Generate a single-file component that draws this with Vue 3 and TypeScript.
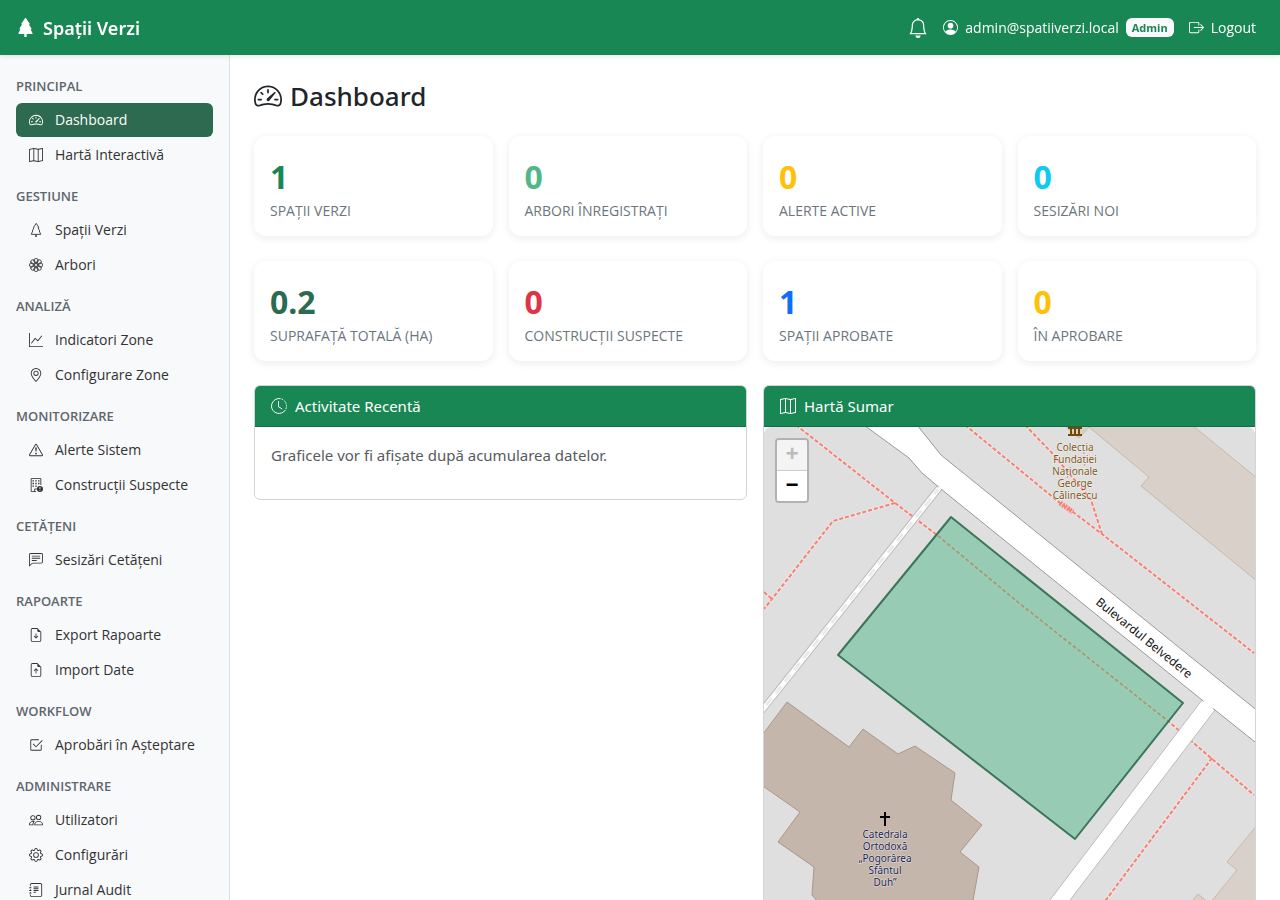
<script setup lang="ts">
import { h, type FunctionalComponent } from 'vue'

interface Shape {
  d: string
  line?: boolean
  dash?: string
}

const fill = (...paths: string[]): Shape[] => paths.map((d) => ({ d }))
const filePage =
  'M14 14V4.5L9.5 0H4a2 2 0 0 0-2 2v12a2 2 0 0 0 2 2h8a2 2 0 0 0 2-2M9.5 3A1.5 1.5 0 0 0 11 4.5h2V14a1 1 0 0 1-1 1H4a1 1 0 0 1-1-1V2a1 1 0 0 1 1-1h5.5z'

const icons: Record<string, Shape[]> = {
  treeFill: fill(
    'M8.416.223a.5.5 0 0 0-.832 0l-3 4.5A.5.5 0 0 0 5 5.5h.098L3.076 8.735A.5.5 0 0 0 3.5 9.5h.191l-1.638 3.276a.5.5 0 0 0 .447.724H7V16h2v-2.5h4.5a.5.5 0 0 0 .447-.724L12.31 9.5h.191a.5.5 0 0 0 .424-.765L10.902 5.5H11a.5.5 0 0 0 .416-.777z'
  ),
  tree: [
    {
      d: 'M8 .8L5.2 5H5.7L3.900 9H4.300L2.600 13H13.400L11.700 9H12.100L10.300 5H10.800z',
      line: true
    },
    { d: 'M7.2 13h1.600v3H7.200z' }
  ],
  speedometer: fill(
    'M8 4a.5.5 0 0 1 .5.5V6a.5.5 0 0 1-1 0V4.5A.5.5 0 0 1 8 4M3.732 5.732a.5.5 0 0 1 .707 0l.915.914a.5.5 0 1 1-.708.708l-.914-.915a.5.5 0 0 1 0-.707M2 10a.5.5 0 0 1 .5-.5h1.586a.5.5 0 0 1 0 1H2.5A.5.5 0 0 1 2 10m9.5 0a.5.5 0 0 1 .5-.5h1.5a.5.5 0 0 1 0 1H12a.5.5 0 0 1-.5-.5m.754-4.246a.39.39 0 0 0-.527-.02L7.547 9.31a.91.91 0 1 0 1.302 1.258l3.434-4.297a.39.39 0 0 0-.029-.518z',
    'M0 10a8 8 0 1 1 15.547 2.661c-.442 1.253-1.845 1.602-2.932 1.25C11.309 13.488 9.475 13 8 13c-1.474 0-3.31.488-4.615.911-1.087.352-2.49.003-2.932-1.25A8 8 0 0 1 0 10m8-7a7 7 0 0 0-6.603 9.329c.203.575.923.876 1.68.63C4.397 12.533 6.358 12 8 12s3.604.532 4.923.96c.757.245 1.477-.056 1.68-.631A7 7 0 0 0 8 3'
  ),
  map: fill(
    'M15.817.113A.5.5 0 0 1 16 .5v14a.5.5 0 0 1-.402.49l-5 1a.5.5 0 0 1-.196 0L5.5 15.01l-4.902.98A.5.5 0 0 1 0 15.5v-14a.5.5 0 0 1 .402-.49l5-1a.5.5 0 0 1 .196 0L10.5.99l4.902-.98a.5.5 0 0 1 .415.103M10 1.91l-4-.8v12.98l4 .8zm1 12.98 4-.8V1.11l-4 .8zm-6-.8V1.11l-4 .8v12.98z'
  ),
  flower: [
    { d: 'M8 6.2a1.8 1.8 0 1 0 0 3.6 1.8 1.8 0 0 0 0-3.6', line: true },
    {
      d: Array.from({ length: 8 }, (_, i) => {
        const a = (i * Math.PI) / 4
        const x = (8 + 5 * Math.cos(a)).toFixed(2)
        const y = (8 + 5 * Math.sin(a)).toFixed(2)
        return `M${x} ${y}m-2.5 0a2.5 2.5 0 1 0 5 0a2.5 2.5 0 1 0-5 0`
      }).join(''),
      line: true
    }
  ],
  graph: fill(
    'M0 0h1v15h15v1H0zm14.817 3.113a.5.5 0 0 1 .07.704l-4.5 5.5a.5.5 0 0 1-.74.037L7.06 6.767l-3.656 5.027a.5.5 0 0 1-.808-.588l4-5.5a.5.5 0 0 1 .758-.06l2.609 2.61 4.15-5.073a.5.5 0 0 1 .704-.07'
  ),
  pin: fill(
    'M12.166 8.94c-.524 1.062-1.234 2.12-1.96 3.07A32 32 0 0 1 8 14.58a32 32 0 0 1-2.206-2.57c-.726-.95-1.436-2.008-1.96-3.07C3.304 7.867 3 6.862 3 6a5 5 0 0 1 10 0c0 .862-.305 1.867-.834 2.94M8 16s6-5.686 6-10A6 6 0 0 0 2 6c0 4.314 6 10 6 10',
    'M8 8a2 2 0 1 1 0-4 2 2 0 0 1 0 4m0 1a3 3 0 1 0 0-6 3 3 0 0 0 0 6'
  ),
  warning: fill(
    'M7.938 2.016A.13.13 0 0 1 8.002 2a.13.13 0 0 1 .063.016.15.15 0 0 1 .054.057l6.857 11.667c.036.06.035.124.002.183a.2.2 0 0 1-.054.06.1.1 0 0 1-.066.017H1.146a.1.1 0 0 1-.066-.017.2.2 0 0 1-.054-.06.18.18 0 0 1 .002-.183L7.884 2.073a.15.15 0 0 1 .054-.057m1.044-.45a1.13 1.13 0 0 0-1.96 0L.165 13.233c-.457.778.091 1.767.98 1.767h13.713c.889 0 1.438-.99.98-1.767z',
    'M7.002 12a1 1 0 1 1 2 0 1 1 0 0 1-2 0M7.1 5.995a.905.905 0 1 1 1.8 0l-.35 3.507a.552.552 0 0 1-1.1 0z'
  ),
  building: [
    { d: 'M7.5 15.5h-5v-15h11v7M6.5 15.5v-3h2', line: true },
    {
      d: 'M4 2.5h1.6v1.5H4zM7.2 2.5h1.6v1.5H7.2zM10.4 2.5H12v1.5h-1.6zM4 5.5h1.6v1.5H4zM7.2 5.5h1.6v1.5H7.2zM10.4 5.5H12v1.5h-1.6zM4 8.5h1.6v1.5H4zM7.2 8.5h1.6v1.5H7.2z'
    },
    { d: 'M12.5 9a3.5 3.5 0 1 0 0 7 3.5 3.5 0 0 0 0-7M12 10.2h1v2.6h-1zM12 13.6h1v1h-1z' }
  ],
  chat: fill(
    'M14 1a1 1 0 0 1 1 1v8a1 1 0 0 1-1 1H4.414A2 2 0 0 0 3 11.586l-2 2V2a1 1 0 0 1 1-1zM2 0a2 2 0 0 0-2 2v12.793a.5.5 0 0 0 .854.353l2.853-2.853A1 1 0 0 1 4.414 12H14a2 2 0 0 0 2-2V2a2 2 0 0 0-2-2z',
    'M3 3.5a.5.5 0 0 1 .5-.5h9a.5.5 0 0 1 0 1h-9a.5.5 0 0 1-.5-.5M3 6a.5.5 0 0 1 .5-.5h9a.5.5 0 0 1 0 1h-9A.5.5 0 0 1 3 6m0 2.5a.5.5 0 0 1 .5-.5h5a.5.5 0 0 1 0 1h-5a.5.5 0 0 1-.5-.5'
  ),
  fileDown: fill(
    'M8.5 6.5a.5.5 0 0 0-1 0v3.793L6.354 9.146a.5.5 0 1 0-.708.708l2 2a.5.5 0 0 0 .708 0l2-2a.5.5 0 0 0-.708-.708L8.5 10.293z',
    filePage
  ),
  fileUp: fill(
    'M8.5 11.5a.5.5 0 0 1-1 0V7.707L6.354 8.854a.5.5 0 1 1-.708-.708l2-2a.5.5 0 0 1 .708 0l2 2a.5.5 0 0 1-.708.708L8.5 7.707z',
    filePage
  ),
  check: fill(
    'M3 14.5A1.5 1.5 0 0 1 1.5 13V3A1.5 1.5 0 0 1 3 1.5h8a.5.5 0 0 1 0 1H3a.5.5 0 0 0-.5.5v10a.5.5 0 0 0 .5.5h10a.5.5 0 0 0 .5-.5V8a.5.5 0 0 1 1 0v5a1.5 1.5 0 0 1-1.5 1.5z',
    'm8.354 10.354 7-7a.5.5 0 0 0-.708-.708L8 9.293 5.354 6.646a.5.5 0 1 0-.708.708l3 3a.5.5 0 0 0 .708 0'
  ),
  people: fill(
    'M15 14s1 0 1-1-1-4-5-4-5 3-5 4 1 1 1 1zm-7.978-1L7 12.996c.001-.264.167-1.03.76-1.72C8.312 10.629 9.282 10 11 10c1.717 0 2.687.63 3.24 1.276.593.69.758 1.457.76 1.72l-.008.002-.014.002zM11 7a2 2 0 1 0 0-4 2 2 0 0 0 0 4m3-2a3 3 0 1 1-6 0 3 3 0 0 1 6 0M6.936 9.28a6 6 0 0 0-1.23-.247A7 7 0 0 0 5 9c-4 0-5 3-5 4q0 1 1 1h4.216A2.24 2.24 0 0 1 5 13c0-1.01.377-2.042 1.09-2.904.243-.294.526-.569.846-.816M4.92 10A5.5 5.5 0 0 0 4 13H1c0-.26.164-1.03.76-1.724.545-.636 1.492-1.256 3.16-1.275ZM1.5 5.5a3 3 0 1 1 6 0 3 3 0 0 1-6 0m3-2a2 2 0 1 0 0 4 2 2 0 0 0 0-4'
  ),
  gear: fill(
    'M8 4.754a3.246 3.246 0 1 0 0 6.492 3.246 3.246 0 0 0 0-6.492M5.754 8a2.246 2.246 0 1 1 4.492 0 2.246 2.246 0 0 1-4.492 0',
    'M9.796 1.343c-.527-1.79-3.065-1.79-3.592 0l-.094.319a.873.873 0 0 1-1.255.52l-.292-.16c-1.64-.892-3.433.902-2.54 2.541l.159.292a.873.873 0 0 1-.52 1.255l-.319.094c-1.79.527-1.79 3.065 0 3.592l.319.094a.873.873 0 0 1 .52 1.255l-.16.292c-.892 1.64.901 3.434 2.541 2.54l.292-.159a.873.873 0 0 1 1.255.52l.094.319c.527 1.79 3.065 1.79 3.592 0l.094-.319a.873.873 0 0 1 1.255-.52l.292.16c1.64.893 3.434-.902 2.54-2.541l-.159-.292a.873.873 0 0 1 .52-1.255l.319-.094c1.79-.527 1.79-3.065 0-3.592l-.319-.094a.873.873 0 0 1-.52-1.255l.16-.292c.893-1.64-.902-3.433-2.541-2.54l-.292.159a.873.873 0 0 1-1.255-.52zm-2.633.283c.246-.835 1.428-.835 1.674 0l.094.319a1.873 1.873 0 0 0 2.693 1.115l.291-.16c.764-.415 1.6.42 1.184 1.185l-.159.292a1.873 1.873 0 0 0 1.116 2.692l.318.094c.835.246.835 1.428 0 1.674l-.319.094a1.873 1.873 0 0 0-1.115 2.693l.16.291c.415.764-.42 1.6-1.185 1.184l-.291-.159a1.873 1.873 0 0 0-2.693 1.116l-.094.318c-.246.835-1.428.835-1.674 0l-.094-.319a1.873 1.873 0 0 0-2.692-1.115l-.292.16c-.764.415-1.6-.42-1.184-1.185l.159-.291A1.873 1.873 0 0 0 1.945 8.93l-.319-.094c-.835-.246-.835-1.428 0-1.674l.319-.094A1.873 1.873 0 0 0 3.06 4.377l-.16-.292c-.415-.764.42-1.6 1.185-1.184l.292.159a1.873 1.873 0 0 0 2.692-1.115z'
  ),
  journal: fill(
    'M5 10.5a.5.5 0 0 1 .5-.5h2a.5.5 0 0 1 0 1h-2a.5.5 0 0 1-.5-.5m0-2a.5.5 0 0 1 .5-.5h5a.5.5 0 0 1 0 1h-5a.5.5 0 0 1-.5-.5m0-2a.5.5 0 0 1 .5-.5h5a.5.5 0 0 1 0 1h-5a.5.5 0 0 1-.5-.5m0-2a.5.5 0 0 1 .5-.5h5a.5.5 0 0 1 0 1h-5a.5.5 0 0 1-.5-.5',
    'M3 0h10a2 2 0 0 1 2 2v12a2 2 0 0 1-2 2H3a2 2 0 0 1-2-2v-1h1v1a1 1 0 0 0 1 1h10a1 1 0 0 0 1-1V2a1 1 0 0 0-1-1H3a1 1 0 0 0-1 1v1H1V2a2 2 0 0 1 2-2',
    'M1 5v-.5a.5.5 0 0 1 1 0V5h.5a.5.5 0 0 1 0 1h-2a.5.5 0 0 1 0-1zm0 3v-.5a.5.5 0 0 1 1 0V8h.5a.5.5 0 0 1 0 1h-2a.5.5 0 0 1 0-1zm0 3v-.5a.5.5 0 0 1 1 0v.5h.5a.5.5 0 0 1 0 1h-2a.5.5 0 0 1 0-1z'
  ),
  bell: fill(
    'M8 16a2 2 0 0 0 2-2H6a2 2 0 0 0 2 2M8 1.918l-.797.161A4 4 0 0 0 4 6c0 .628-.134 2.197-.459 3.742-.16.767-.376 1.566-.663 2.258h10.244c-.287-.692-.502-1.49-.663-2.258C12.134 8.197 12 6.628 12 6a4 4 0 0 0-3.203-3.92zM14.22 12c.223.447.481.801.78 1H1c.299-.199.557-.553.78-1C2.68 10.2 3 6.88 3 6c0-2.42 1.72-4.44 4.005-4.901a1 1 0 1 1 1.99 0A5 5 0 0 1 13 6c0 .88.32 4.2 1.22 6'
  ),
  person: fill(
    'M11 6a3 3 0 1 1-6 0 3 3 0 0 1 6 0',
    'M0 8a8 8 0 1 1 16 0A8 8 0 0 1 0 8m8-7a7 7 0 0 0-5.468 11.37C3.242 11.226 4.805 10 8 10s4.757 1.225 5.468 2.37A7 7 0 0 0 8 1'
  ),
  logout: fill(
    'M10 12.5a.5.5 0 0 1-.5.5h-8a.5.5 0 0 1-.5-.5v-9a.5.5 0 0 1 .5-.5h8a.5.5 0 0 1 .5.5v2a.5.5 0 0 0 1 0v-2A1.5 1.5 0 0 0 9.5 2h-8A1.5 1.5 0 0 0 0 3.5v9A1.5 1.5 0 0 0 1.5 14h8a1.5 1.5 0 0 0 1.5-1.5v-2a.5.5 0 0 0-1 0z',
    'M15.854 8.354a.5.5 0 0 0 0-.708l-3-3a.5.5 0 0 0-.708.708L14.293 7.5H5.5a.5.5 0 0 0 0 1h8.793l-2.147 2.146a.5.5 0 0 0 .708.708z'
  ),
  clock: [
    { d: 'M8 .5a7.500 7.500 0 1 0 5.300 12.800', line: true },
    { d: 'M8 .5a7.500 7.500 0 0 1 5.300 12.800', line: true, dash: '1.6 1' },
    { d: 'M7.500 3.500v5.300l3.400 2', line: true }
  ]
}

const Icon: FunctionalComponent<{ name: string }> = (props) =>
  h(
    'svg',
    { class: 'icon', viewBox: '0 0 16 16', 'aria-hidden': 'true' },
    icons[props.name].map((s) =>
      h(
        'path',
        s.line
          ? { d: s.d, fill: 'none', stroke: 'currentColor', 'stroke-linecap': s.dash ? 'butt' : 'round', 'stroke-linejoin': 'round', 'stroke-dasharray': s.dash }
          : { d: s.d, fill: 'currentColor', 'fill-rule': 'evenodd' }
      )
    )
  )
Icon.props = ['name']

const sections = [
  {
    title: 'Principal',
    items: [
      { label: 'Dashboard', icon: 'speedometer', active: true },
      { label: 'Hartă Interactivă', icon: 'map' }
    ]
  },
  {
    title: 'Gestiune',
    items: [
      { label: 'Spații Verzi', icon: 'tree' },
      { label: 'Arbori', icon: 'flower' }
    ]
  },
  {
    title: 'Analiză',
    items: [
      { label: 'Indicatori Zone', icon: 'graph' },
      { label: 'Configurare Zone', icon: 'pin' }
    ]
  },
  {
    title: 'Monitorizare',
    items: [
      { label: 'Alerte Sistem', icon: 'warning' },
      { label: 'Construcții Suspecte', icon: 'building' }
    ]
  },
  { title: 'Cetățeni', items: [{ label: 'Sesizări Cetățeni', icon: 'chat' }] },
  {
    title: 'Rapoarte',
    items: [
      { label: 'Export Rapoarte', icon: 'fileDown' },
      { label: 'Import Date', icon: 'fileUp' }
    ]
  },
  { title: 'Workflow', items: [{ label: 'Aprobări în Așteptare', icon: 'check' }] },
  {
    title: 'Administrare',
    items: [
      { label: 'Utilizatori', icon: 'people' },
      { label: 'Configurări', icon: 'gear' },
      { label: 'Jurnal Audit', icon: 'journal' }
    ]
  }
] as { title: string; items: { label: string; icon: string; active?: boolean }[] }[]

const stats = [
  { value: '1', label: 'Spații verzi', tone: 'green' },
  { value: '0', label: 'Arbori înregistrați', tone: 'mint' },
  { value: '0', label: 'Alerte active', tone: 'yellow' },
  { value: '0', label: 'Sesizări noi', tone: 'cyan' },
  { value: '0.2', label: 'Suprafață totală (ha)', tone: 'forest' },
  { value: '0', label: 'Construcții suspecte', tone: 'red' },
  { value: '1', label: 'Spații aprobate', tone: 'blue' },
  { value: '0', label: 'În aprobare', tone: 'yellow' }
]

const footpaths = [
  'M796 425L895 503L937 535L1019 603L1168 721L1254 795',
  'M895 503L833 521L772 599L764 609',
  'M764 592L772 599',
  'M965 425L1015 466L1060 503L1073 512L1102 534L1254 653',
  'M1025 425L1052 453L1083 490L1091 500L1102 534',
  'M1212 758L1076 940'
]

const museumLabel = ['Colecția', 'Fundației', 'Naționale', 'George', 'Călinescu']
const churchLabel = ['Catedrala', 'Ortodoxă', '„Pogorârea', 'Sfântul', 'Duh”']
</script>

<template>
  <div class="app">
    <header class="topbar">
      <a class="brand" href="#"><Icon name="treeFill" /><span>Spații Verzi</span></a>
      <nav class="user-nav" aria-label="Cont">
        <button class="bell" type="button" aria-label="Notificări"><Icon name="bell" /></button>
        <a class="account" href="#"><Icon name="person" /><span>admin@spatiiverzi.local</span><span class="badge">Admin</span></a>
        <a class="logout" href="#"><Icon name="logout" /><span>Logout</span></a>
      </nav>
    </header>

    <div class="body">
      <nav class="sidebar" aria-label="Meniu principal">
        <section v-for="s in sections" :key="s.title" class="group">
          <h2>{{ s.title }}</h2>
          <ul>
            <li v-for="i in s.items" :key="i.label">
              <a href="#" :class="{ active: i.active }"><Icon :name="i.icon" /><span>{{ i.label }}</span></a>
            </li>
          </ul>
        </section>
      </nav>

      <main class="main">
        <h1><Icon name="speedometer" /><span>Dashboard</span></h1>

        <div class="stats">
          <article v-for="s in stats" :key="s.label" class="stat">
            <div class="value" :class="s.tone">{{ s.value }}</div>
            <div class="label">{{ s.label }}</div>
          </article>
        </div>

        <div class="panels">
          <section class="panel">
            <h2><Icon name="clock" /><span>Activitate Recentă</span></h2>
            <p>Graficele vor fi afișate după acumularea datelor.</p>
          </section>

          <section class="panel">
            <h2><Icon name="map" /><span>Hartă Sumar</span></h2>
            <div class="map">
              <svg class="map-canvas" viewBox="764 427 491 500" preserveAspectRatio="xMidYMin slice" role="img" aria-label="Hartă">
                <rect class="land" x="700" y="400" width="700" height="600" />
                <g class="house">
                  <path d="M1058 420L1079 438L1089 427L1149 477L1141 486L1258 582V479L1186 420z" />
                  <path d="M1258 824L1227 862L1237 870L1180 940H1258zM1185 910L1198 894L1210 904z" />
                </g>
                <path
                  class="church"
                  d="M760 738L787 702L849 747L863 729L898 754L915 746L955 773L951 800L982 825L960 852L979 867L966 940H850L812 895L814 867L778 842L800 812L760 784z"
                />
                <g class="paths-casing"><path v-for="d in footpaths" :key="d" :d="d" /></g>
                <g class="paths"><path v-for="d in footpaths" :key="d" :d="d" /></g>
                <path class="steps" d="M1060 503L1073 512" />

                <path class="side-road" d="M1202 700L1012 950L1032 950L1215 710" />
                <path class="service" d="M940 487L760 713" />
                <path class="service-fill" d="M940 487L760 713" />
                <path class="service-dash" d="M940 487L760 713" />
                <path
                  class="road"
                  d="M857 420L909 458L922 473L941 489L1202 700L1215 710L1270 754V721L1254 708L941 455L913 420z"
                />
                <path class="road-opening" d="M1204 701L1213 708M939 487L941 489" />

                <path class="area" d="M951 517L1183 703L1075 839L838 655z" />

                <path
                  class="museum-icon"
                  d="M1068 426h14v3h-14zM1070 429h2v5h-2zM1074 429h2v5h-2zM1078 429h2v5h-2zM1068 434h14v2h-14z"
                />
                <g class="map-text museum">
                  <text v-for="(t, i) in museumLabel" :key="t" x="1075" :y="451 + i * 12">{{ t }}</text>
                </g>
                <path class="cross" d="M885 812V826M880 817H890" />
                <g class="map-text church-name">
                  <text v-for="(t, i) in churchLabel" :key="t" x="885" :y="838 + i * 12">{{ t }}</text>
                </g>
                <text class="street" x="1144" y="642" transform="rotate(39 1144 638)">Bulevardul Belvedere</text>
              </svg>
              <div class="zoom">
                <button type="button" disabled aria-label="Mărește">+</button>
                <button type="button" aria-label="Micșorează">−</button>
              </div>
            </div>
          </section>
        </div>
      </main>
    </div>
  </div>
</template>

<style>
body {
  margin: 0;
}
</style>

<style scoped>
* {
  box-sizing: border-box;
}
.app {
  height: 100vh;
  display: flex;
  flex-direction: column;
  font-family: 'Noto Sans', 'Open Sans', sans-serif;
  font-size: 15px;
  line-height: 24px;
  color: #212529;
  background: #fff;
}
a {
  color: inherit;
  text-decoration: none;
}
button {
  font: inherit;
  cursor: pointer;
}
.icon {
  display: block;
  flex: none;
  width: 16px;
  height: 16px;
}
.topbar {
  position: relative;
  z-index: 2;
  flex: none;
  height: 55px;
  padding: 0 24px 0 16px;
  display: flex;
  align-items: center;
  justify-content: space-between;
  background: #198754;
  color: #fff;
  box-shadow: 0 2px 4px rgba(0, 0, 0, 0.08);
}
.brand {
  display: flex;
  align-items: center;
  gap: 8px;
  font-size: 18px;
  font-weight: 600;
}
.brand .icon {
  width: 19px;
  height: 19px;
}
.user-nav,
.account,
.logout {
  display: flex;
  align-items: center;
}
.user-nav {
  gap: 15px;
  font-family: 'Open Sans', 'Noto Sans', sans-serif;
  font-size: 14px;
}
.account,
.logout {
  gap: 7px;
}
.account .icon,
.logout .icon {
  width: 15px;
  height: 15px;
}
.bell {
  padding: 0;
  border: 0;
  background: none;
  color: inherit;
}
.bell .icon {
  width: 20px;
  height: 20px;
}
.badge {
  padding: 0 6px;
  border-radius: 6px;
  background: #f8f9fa;
  color: #198754;
  font-size: 11px;
  line-height: 19px;
  font-weight: 700;
}
.body {
  flex: 1;
  min-height: 0;
  display: flex;
}
.sidebar {
  flex: none;
  width: 230px;
  padding: 7px 16px 16px;
  overflow-y: auto;
  scrollbar-width: none;
  background: #f8f9fb;
  border-right: 1px solid #dee2e6;
  font-family: 'Open Sans', 'Noto Sans', sans-serif;
}
.group h2 {
  margin: 0;
  padding: 12px 0 5px;
  height: 41px;
  font-size: 13px;
  line-height: 24px;
  font-weight: 600;
  text-transform: uppercase;
  color: #5f666d;
}
.group ul {
  margin: 0;
  padding: 0;
  list-style: none;
  display: flex;
  flex-direction: column;
  gap: 1px;
}
.group a {
  height: 34px;
  padding: 0 13px;
  display: flex;
  align-items: center;
  gap: 12px;
  border-radius: 6px;
  font-size: 14px;
  color: #333;
}
.group a .icon {
  width: 14px;
  height: 14px;
}
.group a.active {
  background: #2d6a4f;
  color: #fff;
}
.main {
  flex: 1;
  min-width: 0;
  padding: 24px;
  overflow-y: auto;
  scrollbar-width: none;
}
h1 {
  margin: 0 0 23px;
  display: flex;
  align-items: center;
  gap: 8px;
  font-size: 26px;
  line-height: 34px;
  font-weight: 500;
}
h1 .icon {
  width: 28px;
  height: 28px;
}
.stats {
  display: grid;
  grid-template-columns: repeat(4, 1fr);
  gap: 25px 16px;
  margin-bottom: 24px;
}
.stat {
  padding: 23px 16px 15px;
  border-radius: 12px;
  background: #fff;
  box-shadow: 0 2px 8px rgba(0, 0, 0, 0.08);
}
.value {
  font-size: 32px;
  line-height: 35px;
  font-weight: 700;
}
.label {
  padding-top: 6px;
  font-family: 'Open Sans', 'Noto Sans', sans-serif;
  font-size: 14px;
  line-height: 21px;
  text-transform: uppercase;
  color: #6c757d;
}
.green { color: #198754; }
.mint { color: #52b788; }
.yellow { color: #ffc107; }
.cyan { color: #0dcaf0; }
.forest { color: #2d6a4f; }
.red { color: #dc3545; }
.blue { color: #0d6efd; }
.panels {
  display: grid;
  grid-template-columns: repeat(2, 1fr);
  gap: 16px;
  align-items: start;
}
.panel {
  border: 1px solid #d3d4d5;
  border-radius: 6px;
  overflow: hidden;
  background: #fff;
}
.panel h2 {
  margin: 0;
  padding: 8px 16px;
  display: flex;
  align-items: center;
  gap: 8px;
  font-size: 15px;
  line-height: 24px;
  font-weight: 400;
  color: #fff;
  background: #198754;
  border-bottom: 1px solid #166b45;
}
.panel p {
  margin: 0;
  padding: 16px 16px 32px;
  color: #565b60;
}
.map {
  position: relative;
  border-radius: 8px;
  overflow: hidden;
  background: #ddd;
}
.map-canvas {
  display: block;
  width: 100%;
  height: 500px;
}
.land { fill: #dfdfdf; }
.house path { fill: #d9d0c9; stroke: #c5b8ac; }
.church { fill: #c4b6ab; stroke: #ab9788; }
.paths-casing path { fill: none; stroke: #eee; stroke-width: 4; stroke-opacity: 0.5; }
.paths path { fill: none; stroke: #fa8072; stroke-width: 2; stroke-dasharray: 4 2; }
.steps { stroke: #fa8072; stroke-width: 5; stroke-dasharray: 2 1; }
.side-road { fill: #fff; stroke: #bbb; }
.service { stroke: #bbb; stroke-width: 7; }
.service-fill { stroke: #fff; stroke-width: 5; }
.service-dash { stroke: #ebebeb; stroke-width: 3; stroke-dasharray: 9 6; }
.road { fill: #fff; stroke: #999; }
.road-opening { stroke: #fff; stroke-width: 4; }
.area { fill: #52b788; fill-opacity: 0.5; stroke: #2d6a4f; stroke-opacity: 0.9; stroke-width: 2; stroke-linejoin: round; }
.museum-icon { fill: #734a08; }
.map-text text {
  font-size: 10px;
  text-anchor: middle;
  paint-order: stroke;
  stroke-width: 1;
  stroke-linejoin: round;
}
.museum text { fill: #7d5818; stroke: rgba(255, 255, 255, 0.6); }
.church-name text { fill: #1c1c50; stroke: rgba(255, 255, 255, 0.6); }
.cross { stroke: #000; stroke-width: 2; }
.street { font-size: 12px; text-anchor: middle; fill: #111; }
.zoom {
  position: absolute;
  top: 11px;
  left: 11px;
  display: flex;
  flex-direction: column;
  border: 2px solid rgba(0, 0, 0, 0.2);
  border-radius: 4px;
  overflow: hidden;
  background-clip: padding-box;
}
.zoom button {
  width: 30px;
  height: 30px;
  padding: 0;
  border: 0;
  background: #fff;
  color: #000;
  font: bold 22px/32px 'Liberation Mono', monospace;
}
.zoom button:first-child {
  height: 31px;
  border-bottom: 1px solid #ccc;
}
.zoom button:disabled {
  background: #f4f4f4;
  color: #bbb;
}
</style>
